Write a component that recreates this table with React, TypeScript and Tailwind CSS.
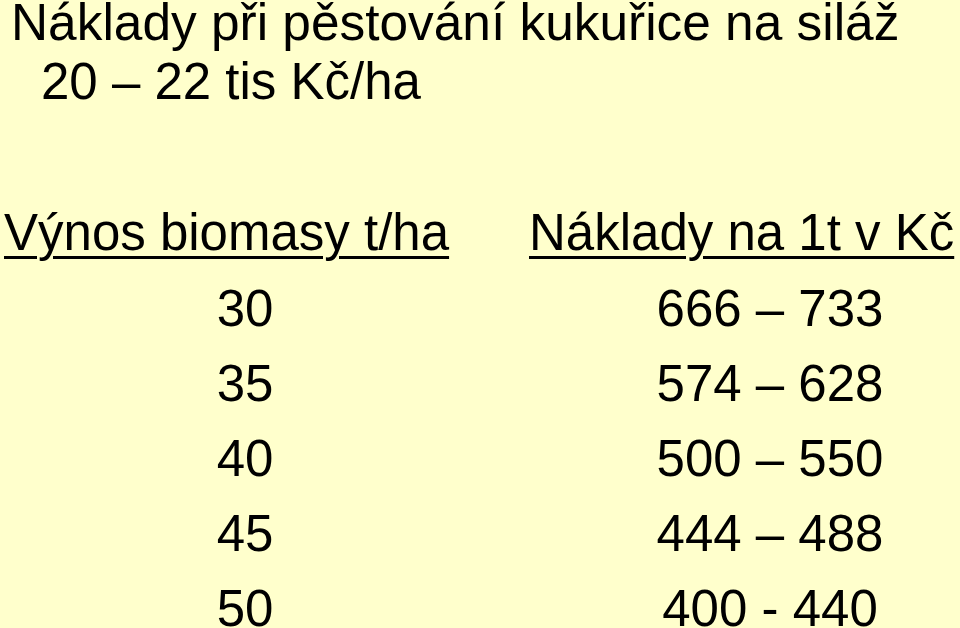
const rows = [
  { yieldT: "30", cost: "666 – 733" },
  { yieldT: "35", cost: "574 – 628" },
  { yieldT: "40", cost: "500 – 550" },
  { yieldT: "45", cost: "444 – 488" },
  { yieldT: "50", cost: "400 - 440" },
]

export default function App() {
  return (
    <div className="h-[628px] w-[960px] overflow-hidden bg-[#ffffcc] font-['Liberation_Sans',Arial,sans-serif] text-[51px] text-black">
      {/* Title */}
      <div className="whitespace-nowrap">
        <div className="pl-[11px] text-[51.4px] leading-[44px]">
          Náklady při pěstování kukuřice na siláž
        </div>
        <div className="mt-[8px] pl-[41px] leading-[60px]">20 – 22 tis Kč/ha</div>
      </div>

      {/* Table */}
      <div className="mt-[82px] grid grid-cols-[490px_470px] whitespace-nowrap">
        <div className="pl-[4px] leading-[77px] underline decoration-[3px] underline-offset-[6px]">
          Výnos biomasy t/ha
        </div>
        <div className="pl-[39px] leading-[77px] underline decoration-[3px] underline-offset-[6px]">
          Náklady na 1t v Kč
        </div>
        {rows.map((row) => (
          <div key={row.yieldT} className="contents">
            <div className="text-center leading-[75px]">{row.yieldT}</div>
            <div className="pl-[90px] text-center leading-[75px]">{row.cost}</div>
          </div>
        ))}
      </div>
    </div>
  )
}
